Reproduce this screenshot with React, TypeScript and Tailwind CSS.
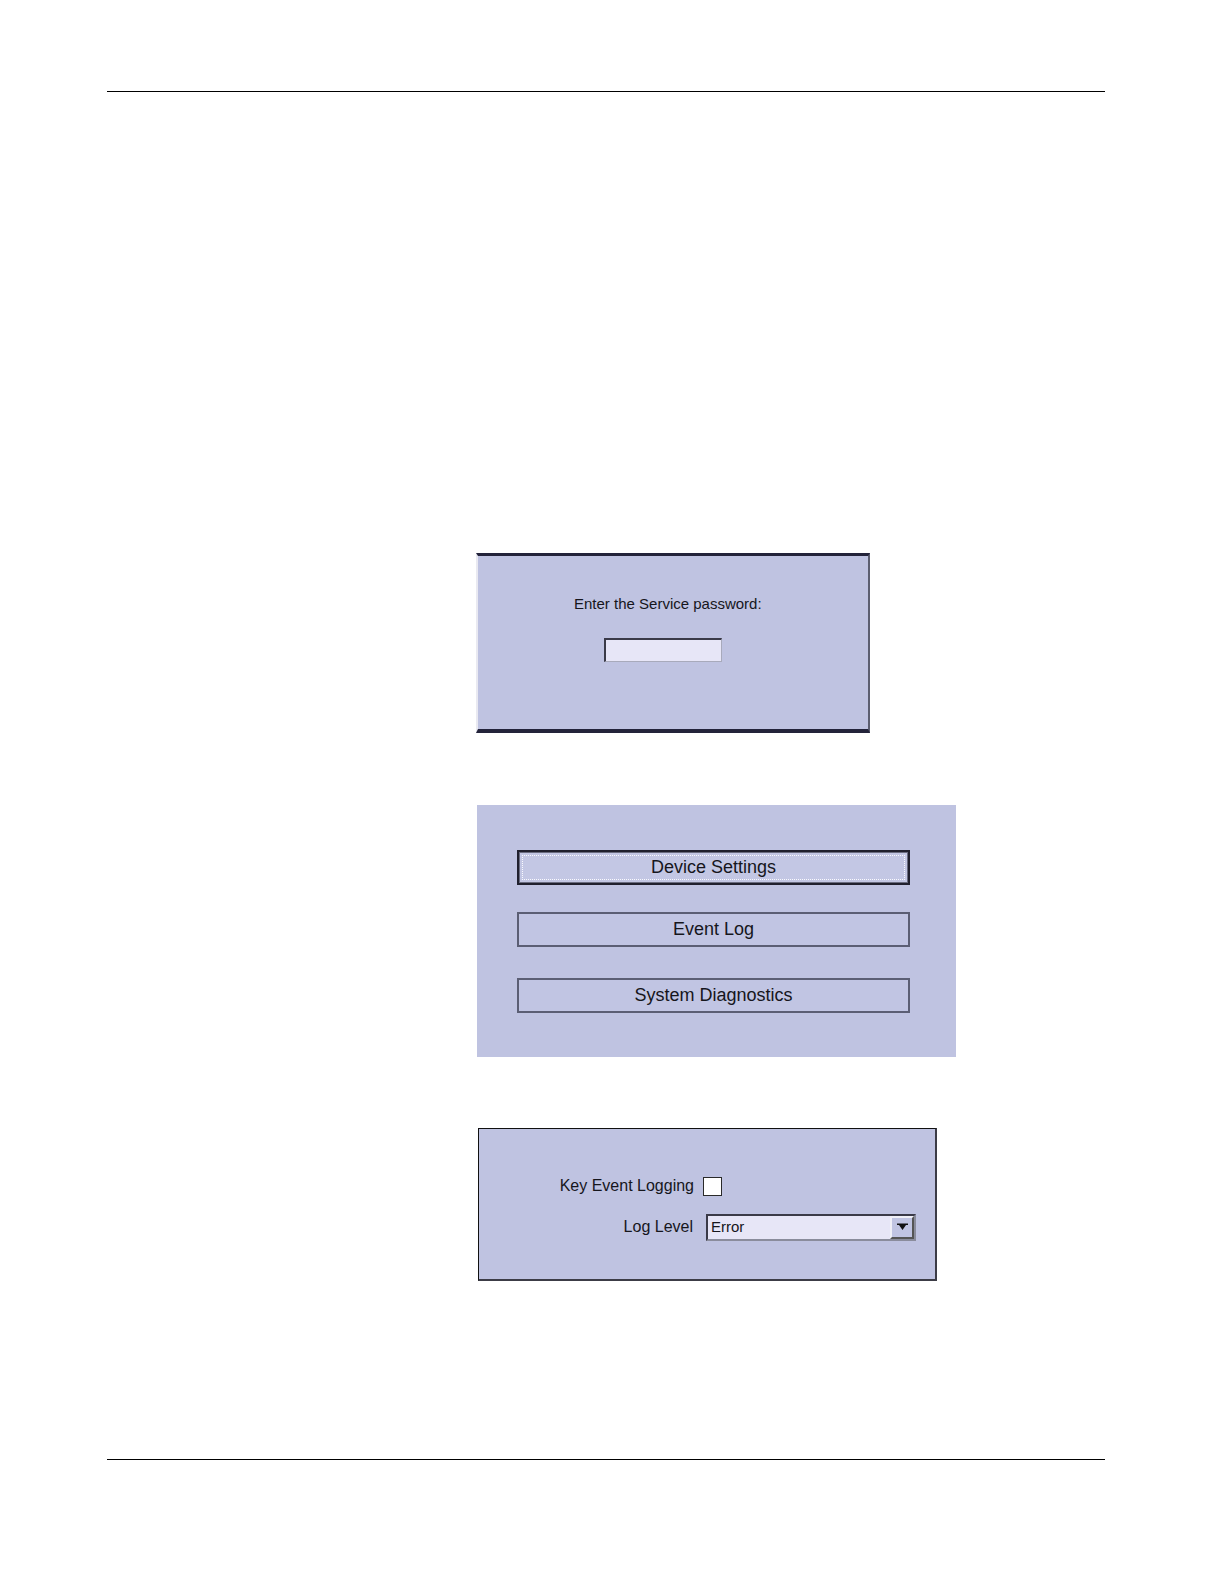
import React from 'react'

// Service screens from a device manual page: password prompt, service menu, settings

const font = { fontFamily: '"Liberation Sans", Arial, sans-serif' }

function PasswordPanel() {
  return (
    <div className="ml-[476px] mt-[461px] w-[394px] h-[180px] bg-[#bfc3e1] border-t-[3px] border-t-[#23233a] border-l-2 border-l-[#e9e9f1] border-r-2 border-r-[#5c5e70] border-b-[4px] border-b-[#23233a] flex flex-col pl-[96px] pt-[39px]">
      <div className="text-[15px] leading-[18px] text-[#16161c]">Enter the Service password:</div>
      <div className="ml-[30px] mt-[25px] w-[118px] h-[24px] bg-[#e7e6f7] border-t-2 border-l-2 border-t-[#3a3a48] border-l-[#3a3a48] border-r border-b border-r-[#a8aabb] border-b-[#a8aabb]" />
    </div>
  )
}

function MenuButton({ label, focused }: { label: string; focused?: boolean }) {
  if (focused) {
    return (
      <div className="w-[393px] h-[35px] border-2 border-[#20202e] bg-[#6a6c80] p-px">
        <div className="w-full h-full bg-[#c3c7e4] p-[2px]">
          <div className="w-full h-full border border-dotted border-[#fafaff] flex items-center justify-center text-[18px] text-[#16161c]">
            {label}
          </div>
        </div>
      </div>
    )
  }
  return (
    <div className="w-[393px] h-[35px] border-2 border-[#5b5e74] bg-[#c1c5e3] flex items-center justify-center text-[18px] text-[#16161c]">
      {label}
    </div>
  )
}

function ServiceMenu() {
  return (
    <div className="ml-[477px] mt-[72px] w-[479px] h-[252px] bg-[#bfc3e1] flex flex-col pl-[40px] pt-[45px]">
      <MenuButton label="Device Settings" focused />
      <div className="mt-[27px]">
        <MenuButton label="Event Log" />
      </div>
      <div className="mt-[31px]">
        <MenuButton label="System Diagnostics" />
      </div>
    </div>
  )
}

function SettingsPanel() {
  return (
    <div className="ml-[478px] mt-[71px] w-[459px] h-[153px] bg-[#bfc3e1] border-l border-t border-[#111] border-r-2 border-b-2 border-r-[#3c3c46] border-b-[#3c3c46] flex flex-col pt-[48px]">
      <div className="flex items-center h-[18px]">
        <div className="w-[216px] text-right text-[16px] text-[#16161c] pr-[1px]">Key Event Logging</div>
        <div className="ml-[8px] w-[19px] h-[19px] bg-white border border-[#2a2a2a]" />
      </div>
      <div className="flex items-center mt-[19px] h-[26px]">
        <div className="w-[214px] text-right text-[16px] text-[#16161c]">Log Level</div>
        <div className="ml-[13px] w-[210px] h-[27px] bg-[#e7e6f7] border-t-2 border-l-2 border-t-[#3a3a48] border-l-[#3a3a48] border-r-2 border-b-2 border-r-[#8a8c9c] border-b-[#8a8c9c] flex items-center">
          <span className="pl-[3px] text-[15px] text-[#16161c] flex-1">Error</span>
          <div className="w-[24px] h-full bg-[#c0c4e2] border-2 border-t-[#f0f0f8] border-l-[#f0f0f8] border-r-[#555] border-b-[#555] flex items-center justify-center">
            <svg width="11" height="8" viewBox="0 0 11 8">
              <path d="M0 0.5 H11 V2 H0 Z M2 2 H9 L5.5 7 Z" fill="#111" />
            </svg>
          </div>
        </div>
      </div>
    </div>
  )
}

export default function App() {
  return (
    <div className="w-[1224px] h-[1584px] bg-white flex flex-col" style={font}>
      <div className="mt-[91px] ml-[107px] w-[998px] h-px bg-black" />
      <PasswordPanel />
      <ServiceMenu />
      <SettingsPanel />
      <div className="mt-[178px] ml-[107px] w-[998px] h-px bg-black" />
    </div>
  )
}
